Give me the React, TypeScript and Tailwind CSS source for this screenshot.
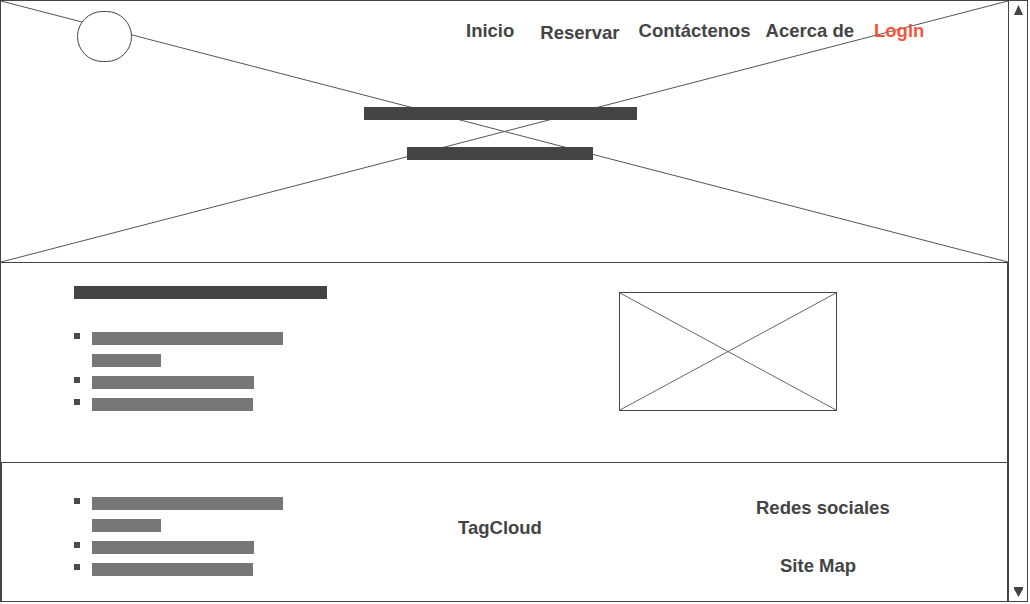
import React from "react";

const font = { fontFamily: '"Liberation Sans", Arial, sans-serif' };

function BulletList() {
  const rows = [
    { w: 191, bullet: true },
    { w: 69, bullet: false },
    { w: 162, bullet: true },
    { w: 161, bullet: true },
  ];
  return (
    <div className="flex flex-col gap-[9px]">
      {rows.map((r, i) => (
        <div key={i} className="flex items-start">
          <div className="w-[18px] h-[13px] flex items-start">
            {r.bullet && <div className="mt-[1px] w-[6px] h-[6px] bg-[#4a4a4a]" />}
          </div>
          <div className="h-[13px] bg-[#777777]" style={{ width: r.w }} />
        </div>
      ))}
    </div>
  );
}

export default function App() {
  return (
    <div
      className="w-[1028px] h-[602px] border border-[#444444] flex bg-white text-[#444444] font-bold text-[18.5px] leading-[18px]"
      style={font}
    >
      <div className="w-[1007px] flex flex-col">
        {/* Hero */}
        <div className="relative h-[262px] border-b border-[#444444] shrink-0">
          <svg
            className="absolute inset-0 w-full h-full"
            viewBox="0 0 1007 261"
            preserveAspectRatio="none"
          >
            <line x1="0" y1="0" x2="1007" y2="261" stroke="#555555" strokeWidth="1" />
            <line x1="1007" y1="0" x2="0" y2="261" stroke="#555555" strokeWidth="1" />
          </svg>
          <div className="relative flex flex-col">
            <div className="flex items-start">
              <div className="ml-[76px] mt-[10px] w-[55px] h-[51px] rounded-full border border-[#444444] bg-white" />
              <span className="ml-[334px] mt-[21px] bg-white">Inicio</span>
              <span className="ml-[26px] mt-[23px] bg-white">Reservar</span>
              <span className="ml-[19px] mt-[21px] bg-white">Contáctenos</span>
              <span className="ml-[15px] mt-[21px] bg-white">Acerca de</span>
              <span className="ml-[20px] mt-[21px] text-[#f2563d]">Login</span>
            </div>
            <div className="ml-[363px] mt-[45px] w-[273px] h-[13px] bg-[#444444]" />
            <div className="ml-[406px] mt-[27px] w-[186px] h-[13px] bg-[#444444]" />
          </div>
        </div>

        {/* Section 2 */}
        <div className="h-[200px] border-b border-r border-[#444444] flex items-start shrink-0">
          <div className="ml-[73px] mt-[23px] w-[253px] flex flex-col">
            <div className="w-[253px] h-[13px] bg-[#444444]" />
            <div className="mt-[33px]">
              <BulletList />
            </div>
          </div>
          <div className="relative ml-[292px] mt-[29px] w-[218px] h-[119px] border border-[#444444]">
            <svg
              className="absolute inset-0 w-full h-full"
              viewBox="0 0 216 117"
              preserveAspectRatio="none"
            >
              <line x1="0" y1="0" x2="216" y2="117" stroke="#666666" strokeWidth="1" />
              <line x1="216" y1="0" x2="0" y2="117" stroke="#666666" strokeWidth="1" />
            </svg>
          </div>
        </div>

        {/* Section 3 */}
        <div className="flex-1 border-l border-r border-[#444444] flex items-start">
          <div className="ml-[72px] mt-[34px] w-[209px]">
            <BulletList />
          </div>
          <span className="ml-[175px] mt-[56px] w-[298px]">TagCloud</span>
          <div className="flex flex-col items-start">
            <span className="mt-[36px]">Redes sociales</span>
            <span className="mt-[40px] ml-[24px]">Site Map</span>
          </div>
        </div>
      </div>

      {/* Scrollbar */}
      <div className="w-[19px] border-l border-[#444444] flex flex-col justify-between">
        <svg className="ml-[5px] mt-[4px]" width="9" height="10" viewBox="0 0 9 10">
          <polygon points="4.5,0 9,10 0,10" fill="#444444" />
        </svg>
        <svg className="ml-[5px] mb-[4px]" width="9" height="10" viewBox="0 0 9 10">
          <polygon points="0,0 9,0 9,2 4.5,10 0,2" fill="#444444" />
        </svg>
      </div>
    </div>
  );
}
